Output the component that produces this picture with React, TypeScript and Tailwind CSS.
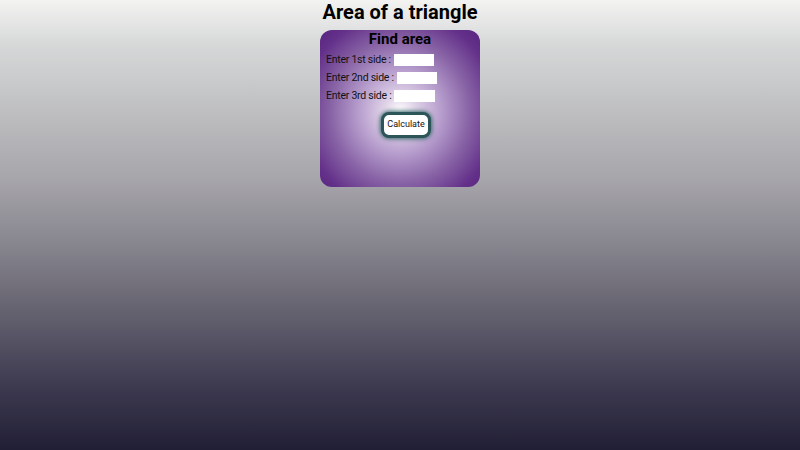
import React from "react";

export default function App() {
  const rows = [
    { label: "Enter 1st side :", w: "w-[40px]" },
    { label: "Enter 2nd side :", w: "w-[40px]" },
    { label: "Enter 3rd side :", w: "w-[41px]" },
  ];
  return (
    <div
      className="w-[800px] h-[450px] flex flex-col items-center bg-[linear-gradient(to_bottom,#f3f3f1_0%,#d6d8d8_10%,#a6a5aa_40%,#6f6c78_65%,#3f3c52_85%,#211f35_100%)] text-black"
      style={{ fontFamily: "Roboto, 'Liberation Sans', sans-serif" }}
    >
      <h1 className="text-[20px] font-bold leading-[24px] mb-[6px]">Area of a triangle</h1>
      <div className="w-[160px] h-[157px] rounded-[12px] bg-[radial-gradient(ellipse_at_50%_52%,#ffffff_0%,#e0d3e8_14%,#b49acb_38%,#8762a5_62%,#64318a_85%,#58247e_100%)] flex flex-col px-[6px]">
        <h2 className="text-[15px] font-bold leading-[18px] text-center">Find area</h2>
        <div className="flex flex-col gap-[6px] mt-[6px]">
          {rows.map((r) => (
            <div key={r.label} className="flex items-center h-[12px] text-[10.5px] tracking-[-0.25px] leading-[12px] text-[#111]">
              <span>{r.label}</span>
              <span className={`ml-[3px] h-[12px] ${r.w} bg-white`}></span>
            </div>
          ))}
        </div>
        <div className="flex justify-center mt-[10px] pl-[12px]">
          <button className="w-[50px] h-[26px] rounded-[8px] bg-white border-[3px] border-[#2b5558] shadow-[0_0_4px_1px_#3b6b6c] text-[9px] text-[#111] flex items-center justify-center">
            Calculate
          </button>
        </div>
      </div>
    </div>
  );
}
